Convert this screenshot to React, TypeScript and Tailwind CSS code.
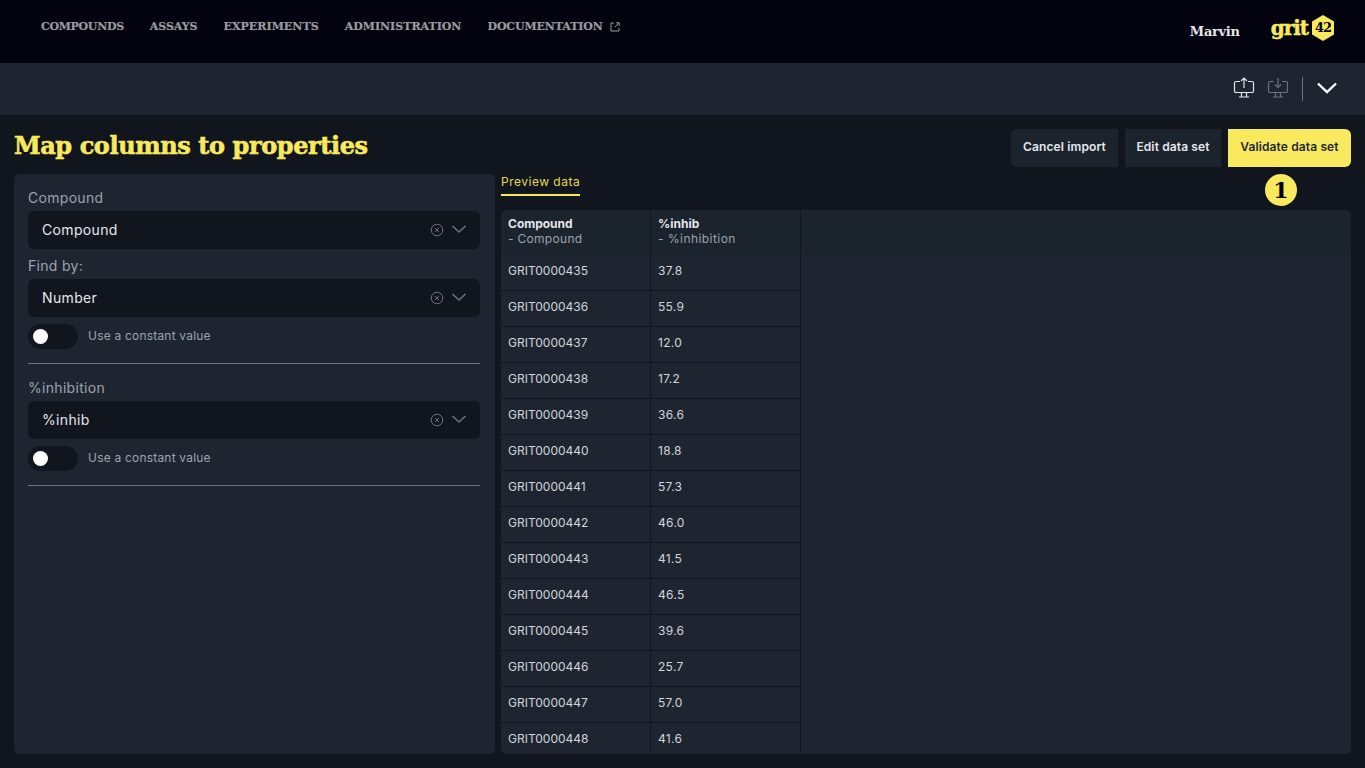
import React from 'react';

const NAV = [
  { label: 'COMPOUNDS', track: 'tracking-[-0.3px]' },
  { label: 'ASSAYS', track: 'tracking-[-0.05px]' },
  { label: 'EXPERIMENTS', track: 'tracking-[0.05px]' },
  { label: 'ADMINISTRATION', track: 'tracking-[0px]' },
];

const ROWS = [
  ['GRIT0000435', '37.8'],
  ['GRIT0000436', '55.9'],
  ['GRIT0000437', '12.0'],
  ['GRIT0000438', '17.2'],
  ['GRIT0000439', '36.6'],
  ['GRIT0000440', '18.8'],
  ['GRIT0000441', '57.3'],
  ['GRIT0000442', '46.0'],
  ['GRIT0000443', '41.5'],
  ['GRIT0000444', '46.5'],
  ['GRIT0000445', '39.6'],
  ['GRIT0000446', '25.7'],
  ['GRIT0000447', '57.0'],
  ['GRIT0000448', '41.6'],
];

const SLAB = "font-['DejaVu_Serif',serif]";

const Select = ({ value }: { value: string }) => (
  <div className="flex h-[38px] items-center rounded-md bg-[#11151e] pl-[14px] pr-[13px]">
    <span className="flex-1 pb-[2px] text-[14px] tracking-[0.35px] text-[#e5e7eb]">{value}</span>
    <svg width="14" height="14" viewBox="0 0 14 14" fill="none" stroke="#6b7280" strokeWidth="1" className="mr-[7px]">
      <circle cx="7" cy="7" r="5.8" />
      <path d="M5 5l4 4M9 5l-4 4" />
    </svg>
    <svg width="16" height="10" viewBox="0 0 16 10" fill="none" stroke="#6b7280" strokeWidth="1.6" className="mb-[2px]">
      <path d="M1.5 2l6.5 6 6.5-6" />
    </svg>
  </div>
);

const Toggle = () => (
  <div className="mt-[7px] flex items-center gap-[10px]">
    <div className="flex h-[25px] w-[50px] items-center rounded-full bg-[#11151e] pl-[5px]">
      <div className="h-[15px] w-[15px] rounded-full bg-white" />
    </div>
    <span className="pb-[2px] text-[12px] tracking-[0.2px] text-[#9ca3af]">Use a constant value</span>
  </div>
);

const Monitor = ({ down, color }: { down?: boolean; color: string }) => (
  <svg width="22" height="22" viewBox="0 0 22 22" fill="none" stroke={color} strokeWidth="1.2">
    <path d="M7 4.5H3a1.5 1.5 0 0 0-1.5 1.5v8A1.5 1.5 0 0 0 3 15.5h16a1.5 1.5 0 0 0 1.5-1.5V6A1.5 1.5 0 0 0 19 4.5h-4" />
    <path d="M8.5 15.5v4M13.5 15.5v4M6 20h10" />
    {down ? <path d="M11 1v9M8 7.5l3 3 3-3" /> : <path d="M11 11V1.5M8 4l3-3 3 3" />}
  </svg>
);

export default function App() {
  return (
    <div className="flex h-[768px] w-[1365px] flex-col overflow-hidden bg-[#11151e] font-['Inter',sans-serif]">
      {/* top nav */}
      <header className="flex h-[63px] shrink-0 items-start bg-[#02030f] pl-[41px] pr-[30px]">
        <nav className={`flex h-[54px] flex-1 items-center gap-[26px] text-[11px] font-bold text-[#9a9a9f] [-webkit-text-stroke:0.2px_#9a9a9f] ${SLAB}`}>
          {NAV.map(n => (
            <span key={n.label} className={n.track}>{n.label}</span>
          ))}
          <span className="flex items-center gap-[7px] tracking-[-0.1px]">
            DOCUMENTATION
            <svg width="10" height="10" viewBox="0 0 10 10" fill="none" stroke="#9a9a9f" strokeWidth="1">
              <path d="M4 1H1v8h8V6M5 5l4-4M6 .8h3.2V4" />
            </svg>
          </span>
        </nav>
        <span className={`mt-[22px] text-[13px] font-bold tracking-[-0.3px] text-[#e5e7eb] ${SLAB}`}>Marvin</span>
        <div className="ml-[31px] mt-[15px] flex items-center">
          <span className={`mr-[3px] text-[20px] font-bold leading-none tracking-[-1px] text-[#f9e95f] [-webkit-text-stroke:0.5px_#f9e95f] ${SLAB}`}>grit</span>
          <div className="relative flex h-[26px] w-[24px] items-center justify-center">
            <svg width="24" height="26" viewBox="0 0 24 26" className="absolute inset-0">
              <path d="M12 0l11 6.5v13L12 26 1 19.5v-13z" fill="#f9e95f" />
            </svg>
            <span className={`relative text-[13px] font-bold tracking-[-1px] text-black ${SLAB}`}>42</span>
          </div>
        </div>
      </header>

      {/* toolbar */}
      <div className="flex h-[52px] shrink-0 items-center justify-end bg-[#1e2530] pb-[2px] pr-[24px]">
        <Monitor color="#e5e7eb" />
        <div className="ml-[12px]">
          <Monitor down color="#6b7280" />
        </div>
        <div className="ml-[13px] mt-[2px] h-[24px] w-px bg-[#6b7280]" />
        <svg width="20" height="12" viewBox="0 0 20 12" fill="none" stroke="#ffffff" strokeWidth="2.4" className="ml-[14px] mr-[4px]">
          <path d="M1 1.5l9 8.5 9-8.5" />
        </svg>
      </div>

      {/* title row */}
      <div className="flex h-[59px] shrink-0 items-end justify-between px-[14px] pb-[7px]">
        <h1 className={`self-center pt-[9px] text-[24px] font-bold tracking-[-0.4px] text-[#f9e95f] [-webkit-text-stroke:0.6px_#f9e95f] ${SLAB}`}>
          Map columns to properties
        </h1>
        <div className="relative flex h-[38px] gap-[7px] text-[12px] font-semibold tracking-[0.12px]">
          <button className="w-[107px] rounded-l-md bg-[#1b232d] pb-[2px] text-[#e5e7eb]">Cancel import</button>
          <button className="w-[96px] bg-[#1b232d] pb-[2px] text-[#e5e7eb]">Edit data set</button>
          <button className="w-[123px] rounded-r-md bg-[#f9e95f] pb-[2px] text-[#1f2937]">Validate data set</button>
          <div className={`absolute right-[54px] top-[45px] flex h-[32px] w-[32px] items-center justify-center rounded-full bg-[#f9e95f] text-[22px] font-bold text-black ${SLAB}`}>
            1
          </div>
        </div>
      </div>

      <div className="flex min-h-0 flex-1 gap-[6px] px-[14px] pb-[14px]">
        {/* mapping form */}
        <aside className="w-[481px] shrink-0 rounded-md bg-[#1e2530] pl-[14px] pr-[15px] pt-[14px] text-[#9ca3af]">
          <div className="mb-[5px] flex h-[18px] items-center text-[14px] tracking-[0.3px]">Compound</div>
          <Select value="Compound" />
          <div className="mb-[4px] mt-[6px] flex h-[20px] items-center text-[14px] tracking-[0.3px]">Find by:</div>
          <Select value="Number" />
          <Toggle />
          <hr className="mb-[14px] mt-[14px] border-[#6b7280]" />
          <div className="mb-[5px] flex h-[18px] items-center text-[14px] tracking-[0.3px]">%inhibition</div>
          <Select value="%inhib" />
          <Toggle />
          <hr className="mt-[14px] border-[#6b7280]" />
        </aside>

        {/* preview */}
        <section className="flex min-w-0 flex-1 flex-col">
          <div className="h-[36px]">
            <div className="h-[22px] w-fit border-b-2 border-[#f9e95f] text-[12px] leading-[15px] tracking-[0.5px] text-[#e6d654]">
              Preview data
            </div>
          </div>
          <div className="min-h-0 flex-1 overflow-hidden rounded-md bg-[#1e2530] text-[12px]">
            <div className="flex h-[44px] bg-[#1b232d]">
              <div className="w-[150px] border-r border-[#11151e] px-[7px] pt-[6px] leading-[15px] text-[#9ca3af]">
                <div className="font-bold text-[#e5e7eb]">Compound</div>
                <div className="tracking-[0.3px]">- Compound</div>
              </div>
              <div className="w-[150px] border-r border-[#11151e] px-[7px] pt-[6px] leading-[15px] text-[#9ca3af]">
                <div className="font-bold text-[#e5e7eb]">%inhib</div>
                <div className="tracking-[0.45px]">- %inhibition</div>
              </div>
            </div>
            {ROWS.map(([id, v], i) => {
              const top = i === 0 ? 'border-t-transparent' : 'border-t-[#11151e]';
              return (
                <div key={id} className="flex h-[36px] text-[#d1d5db]">
                  <div className={`flex w-[150px] items-center border-r border-t border-r-[#11151e] px-[7px] pb-[4px] ${top}`}>{id}</div>
                  <div className={`flex w-[150px] items-center border-r border-t border-r-[#11151e] px-[7px] pb-[4px] tracking-[0.3px] ${top}`}>{v}</div>
                </div>
              );
            })}
          </div>
        </section>
      </div>
    </div>
  );
}
